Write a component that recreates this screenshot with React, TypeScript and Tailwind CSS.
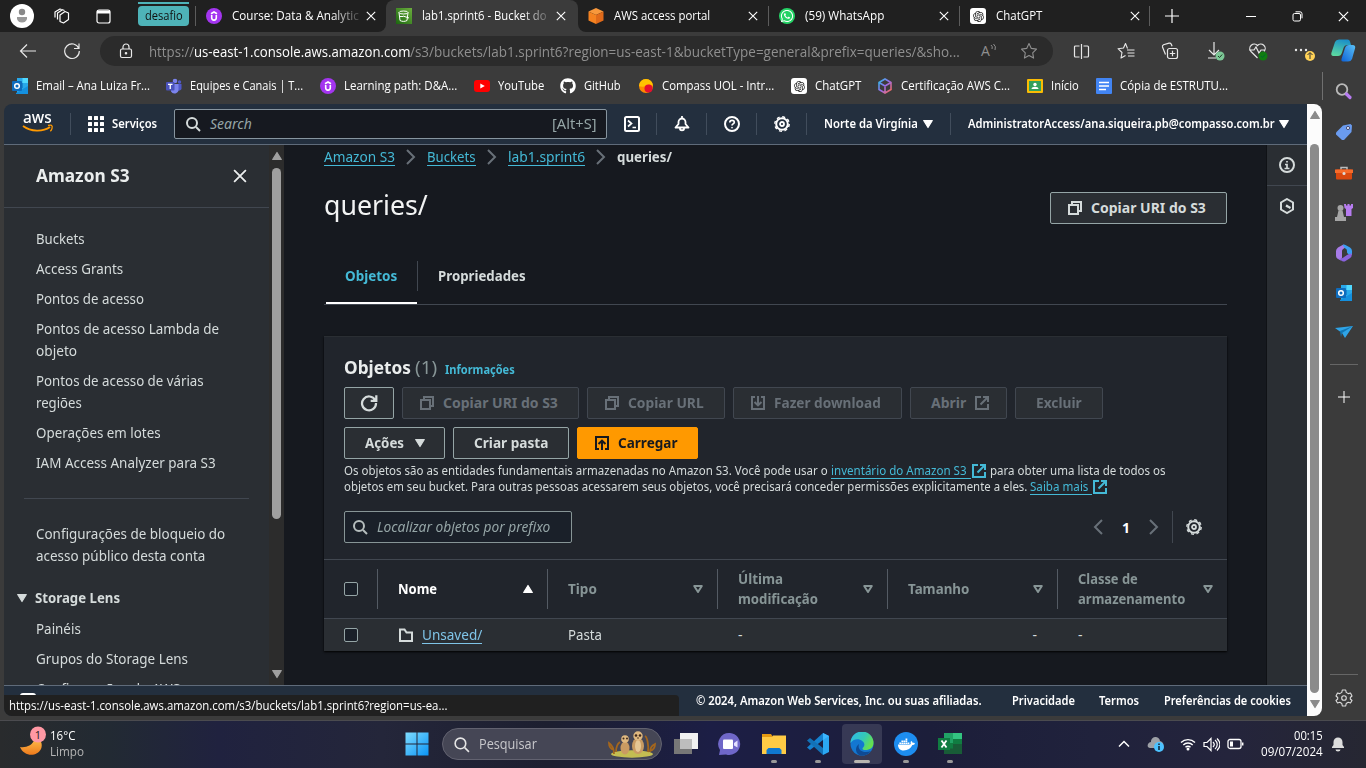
import React, { useLayoutEffect, useRef, useState } from 'react';
import { FaGithub, FaWhatsapp, FaDocker } from 'react-icons/fa';
import { RiOpenaiFill } from 'react-icons/ri';

type Kids = { children?: React.ReactNode };

/** Single line of text condensed or widened to a given width. */
function Fit({ w, className = '', children }: Kids & { w: number; className?: string }) {
  const ref = useRef<HTMLSpanElement>(null);
  const [k, setK] = useState(1);
  useLayoutEffect(() => {
    if (ref.current) setK(w / ref.current.offsetWidth);
  }, [w]);
  return (
    <span className={`block shrink-0 whitespace-nowrap ${className}`} style={{ width: w }}>
      <span ref={ref} className="inline-block origin-left" style={{ transform: `scaleX(${k})` }}>
        {children}
      </span>
    </span>
  );
}

function Svg({ s = 16, vb = 16, sw = 2, className = '', children }: Kids & { s?: number; vb?: number; sw?: number; className?: string }) {
  return (
    <svg width={s} height={s} viewBox={`0 0 ${vb} ${vb}`} fill="none" stroke="currentColor" strokeWidth={sw} className={`block shrink-0 ${className}`}>
      {children}
    </svg>
  );
}

/* ---------- console icons ---------- */
const Copy = () => (
  <Svg><path d="M2 5h9v9H2z" /><path d="M5 5V2h9v9h-3" /></Svg>
);
const External = ({ className = '' }: { className?: string }) => (
  <Svg className={className}><path d="M7 2H2v12h12V9" /><path d="M9 2h5v5M14 2 6.5 9.5" /></Svg>
);
const Download = () => (
  <Svg><path d="M5 2H2v12h12V2h-3" /><path d="M8 1v9M4.5 7 8 10.3 11.500 7" /></Svg>
);
const Upload = () => (
  <Svg><path d="M5 14H2V2h12v12h-3" /><path d="M8 15V6M4.500 9 8 5.700 11.500 9" /></Svg>
);
const Search = ({ sw = 2, s = 16 }: { sw?: number; s?: number }) => (
  <Svg sw={sw} s={s}><circle cx="7" cy="7" r="5" /><path d="m11 11 4 4" /></Svg>
);
const Gear = () => (
  <Svg><circle cx="8" cy="8" r="5.800" /><circle cx="8" cy="8" r="7.200" strokeWidth="1.400" strokeDasharray="3 2.655" /><circle cx="8" cy="8" r="2" strokeWidth="1.800" /></Svg>
);
const Caret = ({ up = false, hollow = false }) => (
  <svg width="12" height="10" viewBox="0 0 12 10" className="block shrink-0">
    <path d={up ? 'M6 1.500 10.300 8.500H1.700z' : hollow ? 'M2.200 2h7.600L6 8z' : 'M1.700 1.500h8.600L6 8.500z'} fill={hollow ? 'none' : 'currentColor'} stroke="currentColor" strokeWidth={hollow ? 2 : 1.200} strokeLinejoin="round" />
  </svg>
);
const ChevR = ({ flip = false }) => (
  <Svg className="text-[#687078]"><path d={flip ? 'm12 1-7 7 7 7' : 'm4 1 7 7-7 7'} /></Svg>
);

/* ---------- brand marks ---------- */
const Udemy = () => (
  <svg width="16" height="16" viewBox="0 0 16 16" className="block shrink-0"><circle cx="8" cy="8" r="8" fill="#a435f0" /><path d="M5.700 7v2.800a2.300 2.300 0 0 0 4.600 0V7M5 5.700 8 4l3 1.700" fill="none" stroke="#fff" strokeWidth="1.600" /></svg>
);
const OpenAI = () => (
  <span className="flex size-4 shrink-0 items-center justify-center rounded-[3px] bg-white text-[#222]"><RiOpenaiFill size={13} /></span>
);
const Outlook = () => (
  <svg width="17" height="16" viewBox="0 0 17 16" className="block shrink-0"><path d="M5 0h11v15H5z" fill="#28a8ea" /><path d="M10.500 0H16v5h-5.500z" fill="#50d9ff" /><path d="M5 5h5.500v5H5z" fill="#0364b8" /><path d="M4 15 16 8v8H4z" fill="#1490df" /><rect y="3" width="10" height="10" rx="1" fill="#0f6cbd" /><circle cx="5" cy="8" r="2.300" fill="none" stroke="#fff" strokeWidth="1.500" /></svg>
);
const Teams = () => (
  <svg width="16" height="16" viewBox="0 0 16 16" className="block shrink-0"><circle cx="9" cy="3" r="2.300" fill="#7b83eb" /><circle cx="13.500" cy="4" r="1.700" fill="#5059c9" /><path d="M11 6h4.500v5a3 3 0 0 1-4.500 1z" fill="#5059c9" /><path d="M5 6h7.500v5.500a4 4 0 0 1-7.500 2z" fill="#7b83eb" /><rect y="4" width="8.500" height="8.500" rx="1" fill="#4b53bc" /><path d="M2 6.300h4.500M4.250 6.500V11" stroke="#fff" strokeWidth="1.300" /></svg>
);
const Youtube = () => (
  <svg width="16" height="16" viewBox="0 0 16 16" className="block shrink-0"><rect y="2" width="16" height="12" rx="3" fill="#f00" /><path d="m6.300 5.500 4.500 2.500-4.500 2.500z" fill="#fff" /></svg>
);
const Compass = () => (
  <svg width="16" height="16" viewBox="0 0 16 16" className="block shrink-0"><circle cx="8" cy="8" r="7" fill="#ff8a00" /><path d="M1 8a7 7 0 0 1 14 0c-3-2-5-2-7 0-2 1-5 1-7 0" fill="#ffc400" /><circle cx="10.500" cy="10.500" r="4" fill="#e6102e" /></svg>
);
const Cube = () => (
  <svg width="16" height="16" viewBox="0 0 16 16" fill="none" strokeWidth="1.600" className="block shrink-0"><defs><linearGradient id="cube" x1="0" y1="0" x2="1" y2="1"><stop stopColor="#25c0e8" /><stop offset=".5" stopColor="#9a6bea" /><stop offset="1" stopColor="#ff6b4a" /></linearGradient></defs><path d="m8 1 6 3.500v7L8 15l-6-3.500v-7zM2 4.500 8 8l6-3.500M8 8v7" stroke="url(#cube)" /></svg>
);
const Classroom = () => (
  <svg width="16" height="16" viewBox="0 0 16 16" className="block shrink-0"><rect y="1" width="16" height="14" rx="1" fill="#fbbc04" /><rect x="2" y="3" width="12" height="10" fill="#34a05a" /><circle cx="8" cy="6.500" r="1.700" fill="#fff" /><path d="M4.500 11c0-3 7-3 7 0z" fill="#fff" /></svg>
);
const Docs = () => (
  <svg width="16" height="16" viewBox="0 0 16 16" className="block shrink-0"><rect width="16" height="16" rx="1" fill="#4285f4" /><path d="M3 4.500h10M3 8h10M3 11.500h7" stroke="#fff" strokeWidth="1.600" /></svg>
);
const Bucket = () => (
  <svg width="16" height="16" viewBox="0 0 16 16" className="block shrink-0"><defs><linearGradient id="bk" x1="0" y1="1" x2="1" y2="0"><stop stopColor="#1b660f" /><stop offset="1" stopColor="#6cae3e" /></linearGradient></defs><path d="M0 0h16v16H0z" fill="url(#bk)" /><g fill="none" stroke="#fff"><ellipse cx="7.500" cy="4.500" rx="4.500" ry="1.500" /><path d="m3 4.500 1 8c2 1.200 5 1.200 7 0l1-8M7 8l6 2M4 8.500h3" /></g></svg>
);
const AwsBox = () => (
  <svg width="16" height="16" viewBox="0 0 16 16" className="block shrink-0"><path d="m8 0 7.500 3.500L8 7 .500 3.500z" fill="#f8983c" /><path d="M.5 3.500 8 7v9L.5 12.500z" fill="#f58220" /><path d="M15.500 3.500 8 7v9l7.500-3.500z" fill="#e06a1a" /></svg>
);

/* ---------- browser chrome ---------- */
const X = ({ s = 10, sw = 1.1 }) => (
  <Svg s={s} vb={10} sw={sw}><path d="m.8.8 8.400 8.400M9.200.8.800 9.200" /></Svg>
);

function Tab({ icon, title, tw, w, active, fade, shape = '', sep }: { icon: React.ReactNode; title: string; tw: number; w: number; active?: boolean; fade?: boolean; shape?: string; sep?: boolean }) {
  return (
    <div className={`h-8 shrink-0 ${active ? 'bg-[#202020]' : 'bg-[#3b3b3b]'}`} style={{ width: w }}>
      <div className={`flex h-full items-center pl-[10px] ${active ? 'rounded-t-lg bg-[#3b3b3b]' : 'bg-[#202020]'} ${shape}`}>
        {icon}
        <div className={`ml-[10px] w-[128px] ${fade ? '[mask-image:linear-gradient(to_right,black_100px,transparent_132px)]' : ''}`}>
          <Fit w={tw}>{title}</Fit>
        </div>
        <span className="ml-[6px]"><X /></span>
        {sep && <span className="ml-auto h-5 w-px bg-[#5c5c5c]" />}
      </div>
    </div>
  );
}

function TabStrip() {
  return (
    <div className="flex h-8 items-center bg-[#202020] text-[12px] text-white">
      <div className="ml-[10px] flex size-6 items-center justify-center rounded-full bg-white">
        <svg width="14" height="16" viewBox="0 0 14 16"><circle cx="7" cy="4" r="3.200" fill="#888" /><path d="M2 9h10v1.500a5 4 0 0 1-10 0z" fill="#999" /></svg>
      </div>
      <Svg s={17} vb={17} sw={1.2} className="ml-[19px]"><path d="m7 7 5-3.500L15.500 5v6.500L10.500 15 7 13.500zM4.500 11.500V5l5-3.300 2 .8M2 9.500V4l5-3 1.500.5" strokeLinejoin="round" /></Svg>
      <Svg s={15} vb={15} sw={1.2} className="ml-[26px]"><rect x="1" y="1" width="13" height="13" rx="2" /><path d="M1 3h13" strokeWidth="3" /></Svg>
      <div className="ml-[27px] flex h-8 w-[51px] flex-col pt-[2px]">
        <span className="h-[2px] bg-[#4eb3b8]" />
        <span className="mt-[2px] flex h-5 items-center justify-center rounded bg-[#4eb3b8] text-[#111]"><Fit w={38}>desafio</Fit></span>
      </div>
      <span className="ml-[6px] h-5 w-px bg-[#5c5c5c]" />
      <Tab w={190} tw={127} icon={<Udemy />} title="Course: Data & Analytic" fade shape="rounded-br-lg" />
      <Tab w={192} tw={125} icon={<Bucket />} title="lab1.sprint6 - Bucket do" fade active />
      <Tab w={191} tw={96} icon={<AwsBox />} title="AWS access portal" shape="rounded-bl-lg" sep />
      <Tab w={191} tw={79} icon={<span className="flex size-4 items-center justify-center rounded-full bg-[#25d366]"><FaWhatsapp size={14} /></span>} title="(59) WhatsApp" sep />
      <Tab w={190} tw={46} icon={<OpenAI />} title="ChatGPT" sep />
      <Svg s={14} vb={14} sw={1.2} className="ml-[15px]"><path d="M7 0v14M0 7h14" /></Svg>
      <span className="ml-[67px] h-px w-[10px] bg-white" />
      <Svg s={11} vb={11} sw={1} className="ml-9"><rect x="1" y="2.500" width="7.500" height="7.500" rx="1.500" /><path d="M3.500.8h4.500a2 2 0 0 1 2 2v4.500" /></Svg>
      <span className="ml-[35px]"><X s={11} /></span>
    </div>
  );
}

const Star = ({ lines = false }) => (
  <Svg s={18} vb={18} sw={1.1}>
    {lines ? (
      <path d="M10.500 6.500 8.500 1.500 6.500 6 1 6.700l4 3.800L4 16l4.500-2.500M10 8h7.500M10.500 11h7M11 14h6.500" strokeLinejoin="round" />
    ) : (
      <path d="m9 1.500 2.300 4.900 5.200.7-3.800 3.700.9 5.300L9 13.500l-4.600 2.600.9-5.300L1.500 7.100l5.200-.7z" strokeLinejoin="round" />
    )}
  </Svg>
);

function AddressBar() {
  return (
    <div className="flex h-[38px] items-center text-[#e8e8e8]">
      <Svg s={18} vb={18} sw={1.2} className="ml-[19px]"><path d="M17 9H1.500M8 2.500 1.500 9 8 15.500" /></Svg>
      <Svg s={18} vb={18} sw={1.2} className="ml-[26px]"><path d="M15.800 6.500A7.300 7.300 0 1 0 16.300 9M16 1.500v5h-5" /></Svg>
      <div className="ml-[19px] flex h-[30px] w-[953px] items-center rounded-full bg-[#2b2b2b] text-[15px] text-[#8f8f8f]">
        <Svg s={16} sw={1.2} className="ml-[18px] text-[#e8e8e8]"><rect x="2.500" y="6" width="11" height="8.500" rx="1.500" /><path d="M5 6V4a3 3 0 0 1 6 0v2" /><circle cx="8" cy="10.300" r=".7" fill="currentColor" /></Svg>
        <Fit w={45} className="ml-[15px]">https://</Fit>
        <Fit w={216} className="text-white">us-east-1.console.aws.amazon.com</Fit>
        <Fit w={550}>/s3/buckets/lab1.sprint6?region=us-east-1&amp;bucketType=general&amp;prefix=queries/&amp;sho...</Fit>
        <span className="ml-[21px] flex items-start"><span className="text-[14px] leading-none">A</span><Svg s={7} vb={7} sw={1}><path d="M1 1q2 1.500 1 4M3.500 0q3 2.500 1.500 6" /></Svg></span>
        <span className="ml-[23px]"><Star /></span>
      </div>
      <Svg s={17} vb={17} sw={1.2} className="ml-5"><path d="M6.500 3H2.500a1 1 0 0 0-1 1v9a1 1 0 0 0 1 1h4M10.500 3h4a1 1 0 0 1 1 1v9a1 1 0 0 1-1 1h-4M8.500 1v15" /></Svg>
      <span className="ml-[27px]"><Star lines /></span>
      <Svg s={18} vb={18} sw={1.2} className="ml-[26px]"><rect x="6.500" y="6.500" width="10" height="10" rx="2" /><path d="M11.500 8.800v5.400M8.800 11.500h5.400M4.500 12.500 1.500 5a2 2 0 0 1 1-2.300L8 1.200a2 2 0 0 1 2.300 1l.8 2" /></Svg>
      <svg width="18" height="20" viewBox="0 0 18 20" fill="none" className="ml-7"><path d="M7 1v13M2 9l5 5 5-5M1 17h8" stroke="#e8e8e8" strokeWidth="1.200" /><circle cx="13" cy="15" r="4.500" fill="#7cc796" /><path d="m11 15 1.500 1.500 2.700-3" stroke="#1d3a26" /></svg>
      <svg width="19" height="19" viewBox="0 0 19 19" fill="none" className="ml-[24px]"><path d="M8.500 16 2 9.500a4 4 0 0 1 6.500-6 4 4 0 0 1 6.500 6M0 8h5l2-3 3 6 2-3h4" stroke="#e8e8e8" strokeWidth="1.200" /><circle cx="14" cy="14" r="4.500" fill="#107c10" /><path d="m12 14 1.500 1.500 2.700-3" stroke="#063" /></svg>
      <svg width="22" height="20" viewBox="0 0 22 20" fill="none" className="ml-[26px]"><g fill="#e8e8e8"><circle cx="2" cy="9" r="1.200" /><circle cx="7" cy="9" r="1.200" /><circle cx="12" cy="9" r="1.200" /></g><circle cx="16" cy="15" r="5" fill="#ffd257" /><path d="M16 18v-6M13.500 14l2.500-2.500 2.500 2.500" stroke="#333" /></svg>
      <svg width="25" height="24" viewBox="0 0 25 24" className="ml-[15px]"><defs><linearGradient id="cpA" x1=".6" y1="0" x2=".3" y2="1"><stop stopColor="#1b8fc8" /><stop offset="1" stopColor="#5cd9a0" /></linearGradient><linearGradient id="cpB" x1="0" y1="1" x2="1" y2="0"><stop stopColor="#0d62d8" /><stop offset="1" stopColor="#5ac0f5" /></linearGradient></defs><path d="M8 .5h8.500q2 0 2.500 2L20 6h-3.500q-3 0-4 3l-1.500 4.500q-1 3.500-4 3.500H3q-3.500 0-2.500-3.500L4 3Q5 .5 8 .5" fill="url(#cpA)" /><path d="M17 22.500h-5q-2 0-1.500-2.500l3.500-11q1-3 4-3h3.500q3.500 0 2.500 3.500L21 20q-1 2.500-4 2.500" fill="url(#cpB)" /></svg>
    </div>
  );
}

const bookmarks: [React.ReactNode, string, number, number][] = [
  [<Outlook />, 'Email – Ana Luiza Fr...', 114, 154],
  [<Teams />, 'Equipes e Canais | T...', 113, 154],
  [<Udemy />, 'Learning path: D&A...', 113, 154],
  [<Youtube />, 'YouTube', 46, 86],
  [<FaGithub size={16} className="shrink-0" />, 'GitHub', 37, 78],
  [<Compass />, 'Compass UOL - Intr...', 112, 153],
  [<OpenAI />, 'ChatGPT', 46, 86],
  [<Cube />, 'Certificação AWS C...', 109, 150],
  [<Classroom />, 'Início', 28, 69],
  [<Docs />, 'Cópia de ESTRUTU...', 108, 140],
];

function Bookmarks() {
  return (
    <div className="flex h-[34px] items-center pb-[2px] pl-3 text-[12px] text-white">
      {bookmarks.map(([icon, label, tw, w]) => (
        <div key={label} className="flex shrink-0 items-center" style={{ width: w }}>
          <span className="w-6 shrink-0">{icon}</span>
          <Fit w={tw}>{label}</Fit>
        </div>
      ))}
      <span className="ml-[86px] h-7 w-px bg-[#707070]" />
    </div>
  );
}

/* ---------- AWS console ---------- */
const Sep = ({ className = '' }) => <span className={`h-[22px] w-px shrink-0 bg-[#414d5c] ${className}`} />;
const NavIcon = ({ children }: Kids) => <span className="flex w-[49px] shrink-0 justify-center">{children}</span>;

function ConsoleNav() {
  return (
    <div className="flex h-[41px] shrink-0 items-center border-b border-[#5f6b7a] bg-[#232f3e] text-[12px] font-semibold text-white">
      <div className="-mt-[2px] ml-[18px] flex w-[31px] flex-col items-center">
        <span className="-mt-1 h-[15px] text-[17px] leading-[15px] font-medium"><Fit w={29}>aws</Fit></span>
        <svg width="32" height="9" viewBox="0 0 32 9" fill="none"><path d="M1 2c8 6 20 6 27 1" stroke="#f90" strokeWidth="1.800" /><path d="M26 1.500c3-.8 5-.5 4 3-.3 1-1 2.200-1.700 2.800" stroke="#f90" strokeWidth="1.300" /></svg>
      </div>
      <Sep className="ml-[17px]" />
      <svg width="16" height="16" viewBox="0 0 16 16" fill="#fff" className="ml-[17px]">
        {[0, 6, 12].map((y) => [0, 6, 12].map((x) => <rect key={`${x}${y}`} x={x} y={y} width="4" height="4" rx=".5" />))}
      </svg>
      <Fit w={45} className="ml-2">Serviços</Fit>
      <div className="ml-[17px] flex h-[30px] w-[433px] items-center rounded-[2px] border border-[#87959f] bg-[#161920] pr-[9px] pl-[10px] text-[14px] font-normal text-[#95a5a6]">
        <span className="text-[#d5dbdb]"><Search /></span>
        <Fit w={42} className="-mt-[2px] ml-[9px] italic">Search</Fit>
        <Fit w={45} className="-mt-[2px] ml-auto">[Alt+S]</Fit>
      </div>
      <NavIcon><Svg><rect x="1" y="1" width="14" height="14" rx="1.500" /><path d="m4 4.500 3.500 3L4 10.500M8.500 11.500H12" strokeWidth="1.700" /></Svg></NavIcon>
      <Sep />
      <NavIcon><Svg sw={1.8}><path d="M1.500 11.500h13L11.500 8V6a3.500 3.500 0 0 0-7 0v2zM8 0v2.500M5.700 12.500c.5 2.500 4.100 2.500 4.600 0" strokeLinejoin="round" /></Svg></NavIcon>
      <Sep />
      <NavIcon><Svg><circle cx="8" cy="8" r="7" /><path d="M5.800 6.500c0-3 4.500-2.800 4.500-.3C10.300 8 8 7.800 8 9.500" strokeWidth="1.700" /><circle cx="8" cy="11.700" r=".5" strokeWidth="1" /></Svg></NavIcon>
      <Sep />
      <NavIcon><Gear /></NavIcon>
      <Sep />
      <Fit w={94} className="ml-[17px]">Norte da Virgínia</Fit>
      <span className="ml-[4px]"><Caret /></span>
      <Sep className="ml-4" />
      <Fit w={307} className="ml-[17px]">AdministratorAccess/ana.siqueira.pb@compasso.com.br</Fit>
      <span className="ml-[3px]"><Caret /></span>
    </div>
  );
}

const NavLine = ({ w, children }: Kids & { w: number }) => <Fit w={w} className="h-[22px] leading-[22px]">{children}</Fit>;

function SideNav() {
  return (
    <div className="flex w-[280px] shrink-0 bg-[#2a2e33] text-[14px] text-[#d5dbdb]">
      <div className="w-[265px] overflow-hidden">
        <div className="flex h-[63px] items-center border-b border-[#414750] pl-8 text-[18px] font-bold text-[#eaeded]">
          <Fit w={94} className="-mt-[2px]">Amazon S3</Fit>
          <span className="ml-[103px]"><X s={14} sw={1.3} /></span>
        </div>
        <div className="flex flex-col gap-2 pt-5 pl-8">
          <NavLine w={49}>Buckets</NavLine>
          <NavLine w={87}>Access Grants</NavLine>
          <NavLine w={108}>Pontos de acesso</NavLine>
          <div><NavLine w={183}>Pontos de acesso Lambda de</NavLine><NavLine w={41}>objeto</NavLine></div>
          <div><NavLine w={168}>Pontos de acesso de várias</NavLine><NavLine w={46}>regiões</NavLine></div>
          <NavLine w={125}>Operações em lotes</NavLine>
          <NavLine w={180}>IAM Access Analyzer para S3</NavLine>
        </div>
        <div className="mx-5 mt-6 h-px bg-[#414750]" />
        <div className="mt-[24px] pl-8"><NavLine w={189}>Configurações de bloqueio do</NavLine><NavLine w={169}>acesso público desta conta</NavLine></div>
        <div className="mt-5 flex h-[22px] items-center pl-3 font-bold">
          <Caret /><Fit w={85} className="-mt-[2px] ml-[7px]">Storage Lens</Fit>
        </div>
        <div className="mt-[9px] flex flex-col gap-2 pl-8">
          <NavLine w={45}>Painéis</NavLine>
          <NavLine w={152}>Grupos do Storage Lens</NavLine>
          <NavLine w={144}>Configurações do AWS</NavLine>
        </div>
      </div>
      <div className="flex w-[15px] flex-col items-center bg-[#2c2c2c] pt-[6px] pb-[6px] text-[#9f9f9f]">
        <Caret up />
        <span className="mt-[7px] h-[351px] w-[9px] rounded-full bg-[#9f9f9f]" />
        <span className="mt-auto"><Caret /></span>
      </div>
    </div>
  );
}

function Btn({ w, label, lw, icon, trail, kind = 'normal', pad = 'pl-4' }: { w: number; label?: string; lw?: number; icon?: React.ReactNode; trail?: React.ReactNode; kind?: 'normal' | 'off' | 'primary'; pad?: string }) {
  const look = {
    normal: 'border-[#95a5a6] bg-[#2a2e33] text-[#d5dbdb]',
    off: 'border-[#414750] bg-[#2a2e33] text-[#687078]',
    primary: 'border-[#ff9900] bg-[#ff9900] text-[#16191f]',
  }[kind];
  return (
    <div className={`flex h-8 shrink-0 items-center gap-2 rounded-[2px] border text-[14px] font-bold ${look} ${pad}`} style={{ width: w }}>
      {icon}
      {label && <Fit w={lw || 50} className="-mt-[2px]">{label}</Fit>}
      {trail}
    </div>
  );
}

const Crumb = ({ w, children }: Kids & { w: number }) => (
  <span className="border-b border-[#44b9d6] text-[#44b9d6]"><Fit w={w} className="h-[17px] leading-[17px]">{children}</Fit></span>
);
const Box = () => <span className="block size-[14px] shrink-0 rounded-[2px] border border-[#95a5a6] bg-[#1a2029]" />;

function HeadCell({ lines, active }: { lines: [string, number][]; active?: boolean }) {
  return (
    <div className={`flex h-10 items-center justify-between border-l border-[#545b64] pr-[13px] pl-5 ${active ? 'text-white' : 'text-[#879596]'}`}>
      <div className="leading-5">{lines.map(([t, w]) => <Fit key={t} w={w}>{t}</Fit>)}</div>
      <Caret up={active} hollow={!active} />
    </div>
  );
}

function ObjectsPanel() {
  return (
    <div className="mt-[31px] h-[315px] w-[903px] border-t border-[#2a2e33] bg-[#21252c] shadow-[0_1px_2px_#000]">
      <div className="px-5 pt-[20px]">
        <div className="flex h-[22px] items-center text-[18px] text-[#eaeded]">
          <Fit w={67} className="-mt-[2px] font-bold">Objetos</Fit>
          <Fit w={22} className="-mt-[2px] ml-1 text-[#879596]">(1)</Fit>
          <Fit w={70} className="mt-[3px] ml-2 text-[12px] font-bold text-[#44b9d6]">Informações</Fit>
        </div>
        <div className="mt-2 flex gap-2">
          <Btn w={50} pad="pl-[15px]" icon={<Svg s={18}><path d="M13.500 5.500A6.200 6.200 0 1 0 14.200 8M14.500 1v5h-5" /></Svg>} />
          <Btn w={177} kind="off" icon={<Copy />} label="Copiar URI do S3" lw={115} />
          <Btn w={138} kind="off" icon={<Copy />} label="Copiar URL" lw={76} />
          <Btn w={169} kind="off" icon={<Download />} label="Fazer download" lw={107} />
          <Btn w={97} kind="off" pad="pl-5" trail={<External />} label="Abrir" lw={35} />
          <Btn w={88} kind="off" pad="pl-5" label="Excluir" lw={46} />
        </div>
        <div className="mt-2 flex gap-2">
          <Btn w={101} pad="pl-5" label="Ações" lw={39} trail={<span className="ml-[2px]"><Caret /></span>} />
          <Btn w={116} pad="pl-5" label="Criar pasta" lw={74} />
          <Btn w={121} kind="primary" icon={<Upload />} label="Carregar" lw={59} />
        </div>
        <div className="mt-1 text-[12px] leading-4 text-[#d5dbdb]">
          <div className="flex h-4">
            <Fit w={484}>Os objetos são as entidades fundamentais armazenadas no Amazon S3. Você pode usar o</Fit>
            <span className="ml-[3px] w-[140px] border-b border-[#44b9d6] text-[#44b9d6]"><Fit w={136}>inventário do Amazon S3</Fit></span>
            <External className="text-[#44b9d6]" />
            <Fit w={176} className="ml-[3px]">para obter uma lista de todos os</Fit>
          </div>
          <div className="flex h-4">
            <Fit w={683}>objetos em seu bucket. Para outras pessoas acessarem seus objetos, você precisará conceder permissões explicitamente a eles.</Fit>
            <span className="ml-[3px] w-[62px] border-b border-[#44b9d6] text-[#44b9d6]"><Fit w={58}>Saiba mais</Fit></span>
            <External className="text-[#44b9d6]" />
          </div>
        </div>
        <div className="mt-4 flex h-8 items-center">
          <div className="flex h-8 w-[228px] items-center rounded-[2px] border border-[#879596] bg-[#1a2029] pl-[7px] text-[14px] text-[#95a5a6] italic">
            <span className="text-[#b5bdbd]"><Search /></span>
            <Fit w={173} className="-mt-px ml-[9px]">Localizar objetos por prefixo</Fit>
          </div>
          <span className="ml-[518px]"><ChevR flip /></span>
          <Fit w={8} className="ml-4 text-[14px] font-bold text-white">1</Fit>
          <span className="ml-4"><ChevR /></span>
          <span className="ml-[10px] h-8 w-px bg-[#414750]" />
          <span className="ml-[13px] text-[#d5dbdb]"><Gear /></span>
        </div>
      </div>
      <div className="mt-4 grid h-[59px] grid-cols-[53px_repeat(5,170px)] items-center border-t border-[#414750] text-[14px] font-bold">
        <div className="pl-5"><Box /></div>
        <HeadCell active lines={[['Nome', 39]]} />
        <HeadCell lines={[['Tipo', 29]]} />
        <HeadCell lines={[['Última', 45], ['modificação', 80]]} />
        <HeadCell lines={[['Tamanho', 61]]} />
        <HeadCell lines={[['Classe de', 60], ['armazenamento', 107]]} />
      </div>
      <div className="grid h-[33px] grid-cols-[53px_repeat(5,170px)] items-center border-t border-[#414750] bg-[#2a2e33] text-[14px] leading-[18px] text-[#d5dbdb]">
        <div className="pl-5"><Box /></div>
        <div className="flex items-center pl-[21px]">
          <Svg><path d="M2 2.500h4.500l2 3H14V14H2z" /></Svg>
          <span className="ml-2 border-b border-[#7fc4e8] text-[#7fc4e8]"><Fit w={60} className="h-[17px] leading-[17px]">Unsaved/</Fit></span>
        </div>
        <div className="-mt-px pl-[21px]"><Fit w={34}>Pasta</Fit></div>
        <div className="-mt-px pl-[21px]">-</div>
        <div className="-mt-px pr-5 text-right">-</div>
        <div className="-mt-px pl-[21px]">-</div>
      </div>
    </div>
  );
}

function Main() {
  return (
    <div className="flex-1 overflow-hidden bg-[#16191f] pl-10 text-[14px] text-[#d5dbdb]">
      <div className="mt-[3px] flex h-[18px] items-center">
        <Crumb w={71}>Amazon S3</Crumb>
        <span className="mx-2"><ChevR /></span>
        <Crumb w={49}>Buckets</Crumb>
        <span className="mx-2"><ChevR /></span>
        <Crumb w={77}>lab1.sprint6</Crumb>
        <span className="mx-2"><ChevR /></span>
        <Fit w={55} className="-mt-px font-bold">queries/</Fit>
      </div>
      <div className="mt-[26px] flex h-8 w-[903px] items-center justify-between">
        <Fit w={104} className="-mt-[8px] text-[28px] leading-8 text-[#f2f3f3]">queries/</Fit>
        <Btn w={177} icon={<Copy />} label="Copiar URI do S3" lw={115} />
      </div>
      <div className="mt-[24px] flex h-[57px] w-[903px] border-b border-[#414750] pl-[2px] font-bold">
        <div className="flex h-full w-[91px] items-start border-b-2 border-white pt-[17px] pl-[19px] text-[#44b9d6]"><Fit w={52}>Objetos</Fit></div>
        <span className="mt-[13px] h-[30px] w-px bg-[#414750]" />
        <Fit w={88} className="mt-[17px] ml-5">Propriedades</Fit>
      </div>
      <ObjectsPanel />
    </div>
  );
}

function Footer() {
  return (
    <div className="relative flex h-[31px] shrink-0 items-center border-t border-[#5f6b7a] bg-[#232f3e] text-[12px] font-semibold text-white">
      <span className="absolute top-[7px] left-4 h-4 w-4 rounded-[3px] border-2 border-white" />
      <Fit w={286} className="ml-[692px]">© 2024, Amazon Web Services, Inc. ou suas afiliadas.</Fit>
      <Fit w={63} className="ml-[30px]">Privacidade</Fit>
      <Fit w={40} className="ml-[24px]">Termos</Fit>
      <Fit w={127} className="ml-[25px]">Preferências de cookies</Fit>
      <div className="absolute bottom-0 left-0 flex h-[21px] w-[675px] items-center rounded-tr bg-[#202020] pl-[5px] font-['Open_Sans','Noto_Sans',sans-serif] font-normal">
        <Fit w={438}>https://us-east-1.console.aws.amazon.com/s3/buckets/lab1.sprint6?region=us-ea...</Fit>
      </div>
    </div>
  );
}

function Page() {
  return (
    <div className="flex h-[612px] w-[1318px] overflow-hidden rounded-lg">
      <div className="flex w-[1303px] flex-col">
        <ConsoleNav />
        <div className="flex min-h-0 flex-1">
          <SideNav />
          <Main />
          <div className="flex w-[41px] shrink-0 flex-col items-center border-l border-[#101216] bg-[#2a2e33] text-[#d5dbdb]">
            <div className="flex h-[41px] w-full items-center justify-center border-b border-[#414750]">
              <Svg><circle cx="8" cy="8" r="7" /><path d="M6 7.500h2v4M5.500 11.500h5M8 4v1.600" strokeWidth="1.700" /></Svg>
            </div>
            <span className="mt-3"><Svg><path d="m8 1 6 3.500v7L8 15l-6-3.500v-7z" /><circle cx="8" cy="8" r="1.200" fill="currentColor" stroke="none" /><path d="M7 7.500 11.500 10" strokeWidth="2.200" /></Svg></span>
          </div>
        </div>
        <Footer />
      </div>
      <div className="flex w-[15px] flex-col items-center bg-[#fcfcfc] pt-[6px] pb-[7px] text-[#8b8b8b]">
        <Caret up />
        <span className="mt-[24px] h-[549px] w-[9px] rounded-full bg-[#8b8b8b]" />
        <span className="mt-auto"><Caret /></span>
      </div>
    </div>
  );
}

function EdgeSidebar() {
  return (
    <div className="flex w-11 flex-col items-center">
      <svg width="20" height="20" viewBox="0 0 20 20" fill="none" className="-mt-[23px]"><circle cx="8" cy="8.500" r="5.300" stroke="#b9b9b9" strokeWidth="1.800" /><path d="m12.500 13 3.500 3.500" stroke="#b77cf0" strokeWidth="3.200" strokeLinecap="round" /></svg>
      <svg width="18" height="18" viewBox="0 0 18 18" className="mt-[22px]"><path d="m1 9.500 7-7L15.500 1 17 2.500 16.500 9 9 17H7L1 11.500z" fill="#6a9bef" /><circle cx="13" cy="5" r="1.600" fill="#dfe9ff" stroke="#335" strokeWidth=".8" /></svg>
      <svg width="18" height="16" viewBox="0 0 18 16" className="mt-[24px]"><path d="M6 5V2.500h6V5" fill="none" stroke="#bbb" strokeWidth="1.500" /><rect x="1" y="4.500" width="16" height="10" rx="1" fill="#d9480f" /><path d="M0 4.500h18v3.500H0z" fill="#f76b2a" /><circle cx="9" cy="8.500" r="1.500" fill="#ddd" /></svg>
      <svg width="18" height="19" viewBox="0 0 18 19" className="mt-[22px]"><path d="M9 1h2v1.500h1.500V1h2v1.500H16V1h2v4l-1.500 1v7H11V6L9.500 5z" fill="#b77cf0" /><g fill="#a5a5a5"><circle cx="5.500" cy="5" r="3" /><path d="M3.500 7.500h4L9 14h2v4H0v-4h2z" /></g></svg>
      <svg width="18" height="18" viewBox="0 0 18 18" className="mt-[22px]"><path d="M8.500.5 3 3.500Q1 5 1 7v5q0 2 2 3l3 1.500 1-3V7q0-1.500 1.500-2.300L11 3z" fill="#a77be8" /><path d="M7.500 1Q9 0 10.500 1L15 3.500q2 1.200 2 3.500v4q-4 0-5-2.500V7q0-2-2-2.800z" fill="#3aa0f3" /><path d="M17 9.500q0 4-2.500 5L10.500 17q-1.500 1-3.500 0l-4-2.500q3 .5 5-.8l4-2.700q2-1.500 5-1.500" fill="#8a63dd" /><path d="M7.500 7 9.500 6 12 7.500v3L9.500 12l-2-1z" fill="#3b3b3b" /></svg>
      <span className="mt-[23px]"><Outlook /></span>
      <svg width="18" height="14" viewBox="0 0 18 14" className="mt-[24px]"><path d="m0 3 18-2-8 12-3-5z" fill="#2fa4e7" /><path d="M18 1 7 8l-1 4-1-6z" fill="#1277b5" /></svg>
      <span className="mt-[25px] h-px w-7 bg-[#666]" />
      <Svg s={12} vb={12} sw={1} className="mt-[26px] text-white"><path d="M6 0v12M0 6h12" /></Svg>
      <span className="mt-[271px] h-px w-7 bg-[#666]" />
      <Svg s={18} vb={18} sw={1.1} className="mt-[14px] text-[#ddd]"><circle cx="9" cy="9" r="2.300" /><path d="m7.300 1-.5 2.400-2 1.200L2.500 4 1 7l1.700 1.500v1.500L1 11.500 2.500 14l2.300-.7 2 1.200.5 2.500h3.400l.5-2.500 2-1.200 2.300.7 1.500-2.500-1.700-1.500V8.500L17 7l-1.500-3-2.300.6-2-1.200L10.700 1z" strokeLinejoin="round" /></Svg>
    </div>
  );
}

/* ---------- taskbar ---------- */
const Slot = ({ active, mark, children }: Kids & { active?: boolean; mark?: boolean }) => (
  <div className={`flex h-10 w-10 shrink-0 flex-col items-center rounded pt-2 ${active ? 'bg-white/12' : ''}`}>
    {children}
    <span className={`mt-auto mb-px h-[3px] rounded-full ${active ? 'w-4 bg-[#b9b5b0]' : mark ? 'w-[6px] bg-[#999]' : 'w-0'}`} />
  </div>
);

function Meerkats() {
  return (
    <svg width="48" height="27" viewBox="0 0 48 27">
      <ellipse cx="24" cy="23" rx="21" ry="3.700" fill="#c3bd52" />
      <path d="M6 23C6 17 4 14 1 12c0 4 2 6 5 7M8 21c0-5 1-8 4-10M42 21c0-5 3-7 5-8 0 4-2 6-5 7M40 21c1-7-1-15-3-16" stroke="#a4661c" strokeWidth="1.800" fill="none" />
      <ellipse cx="17" cy="17" rx="4.500" ry="6.500" fill="#c99b62" /><circle cx="17" cy="8" r="3.800" fill="#dfb980" /><ellipse cx="30" cy="15" rx="6" ry="8" fill="#c99b62" /><ellipse cx="30" cy="15" rx="3" ry="6" fill="#e6c794" /><circle cx="30" cy="5" r="4.700" fill="#dfb980" />
      <g fill="#40291a"><circle cx="15.500" cy="7.500" r="1" /><circle cx="19" cy="7.500" r="1" /><circle cx="28" cy="4.500" r="1.300" /><circle cx="32" cy="4.500" r="1.300" /><circle cx="30" cy="7" r=".8" /></g>
    </svg>
  );
}

function Taskbar() {
  return (
    <div className="flex h-12 items-center border-t border-[#4b4b4f] bg-[linear-gradient(90deg,#292b2d_0%,#222a33_8%,#20223f_16%,#24263a_28%,#1d1f30_40%,#1c1e45_52%,#1c1e3a_68%,#20223c_80%,#24243c_90%,#262732_100%)] pb-px text-[12px] text-white">
      <svg width="30" height="32" viewBox="0 0 30 32" className="-mt-[6px] ml-[18px] shrink-0"><defs><linearGradient id="moon" x1="0" y1="0" x2="0" y2="1"><stop stopColor="#ffc14d" /><stop offset="1" stopColor="#ee7a1c" /></linearGradient></defs><path d="M2 22c5 1 13-1 15-9 6 1 8 6 6 11-4 8-17 8-21-2" fill="url(#moon)" /><circle cx="20" cy="9.500" r="8" fill="#ff98a4" /><text x="20" y="13.500" textAnchor="middle" fontSize="11" fill="#222">1</text></svg>
      <div className="-mt-px ml-[2px] leading-4"><Fit w={25}>16°C</Fit><Fit w={34} className="text-[#b5b5b5]">Limpo</Fit></div>
      <svg width="24" height="24" viewBox="0 0 24 24" className="ml-[321px] shrink-0"><defs><linearGradient id="win" x1="0" y1="0" x2="1" y2="1"><stop stopColor="#7fdcff" /><stop offset="1" stopColor="#0a94f5" /></linearGradient></defs><path d="M.5.5h11v11H.5zm12 0h11v11h-11zm-12 12h11v11H.5zm12 0h11v11h-11z" fill="url(#win)" /></svg>
      <div className="ml-[13px] flex h-8 w-[220px] shrink-0 items-center rounded-full border border-[#626270] bg-[#454655] pl-[10px] text-[14px] text-[#c8c8cc]">
        <span className="text-[#e5e5e5]"><Search sw={1.5} s={17} /></span>
        <Fit w={58} className="-mt-px ml-[9px]">Pesquisar</Fit>
        <span className="ml-[71px]"><Meerkats /></span>
      </div>
      <div className="ml-1 flex gap-1">
        <Slot><svg width="24" height="24" viewBox="0 0 24 24"><path d="M6 1h18v16H6z" fill="#f1f1f1" /><path d="M0 7h18v15H0z" fill="#777" /><path d="M6 7h12v10H6z" fill="#bdbdbd" /></svg></Slot>
        <Slot><svg width="24" height="24" viewBox="0 0 24 24"><path d="M12 1a11 11 0 1 1-4 21.500L1 23l1-5A11 11 0 0 1 12 1" fill="#6f67c8" /><rect x="5" y="7.500" width="10" height="9.500" rx="1" fill="#fff" /><path d="m16 11 3.500-2.500v7L16 13.500z" fill="#e3e0ff" /></svg></Slot>
        <Slot mark><svg width="24" height="24" viewBox="0 0 24 24"><path d="M0 2h9l2 3H0z" fill="#e59a12" /><path d="M0 5h10l1-1.500h13V22H0z" fill="#ffcb45" /><path d="M4.500 22v-4l2-2h11l2 2v4z" fill="#0f78d0" /></svg></Slot>
        <Slot mark><svg width="24" height="24" viewBox="0 0 24 24"><path d="m17 1 6 3v16l-6 3z" fill="#2ba7f2" /><path d="M17 1 1 15.500 4 18 17 8z" fill="#1581cf" /><path d="M17 23 1 8.500 4 6l13 10z" fill="#1272b8" /><path d="m17 1 6 3-6 4z" fill="#3cb6ff" /></svg></Slot>
        <Slot active><svg width="24" height="24" viewBox="0 0 24 24"><defs><linearGradient id="eg" x1="0" y1="0" x2="1" y2=".5"><stop stopColor="#2db8ee" /><stop offset=".6" stopColor="#35c9b5" /><stop offset="1" stopColor="#66e04e" /></linearGradient></defs><circle cx="12" cy="12" r="11.500" fill="#1377d1" /><path d="M.5 11A11.500 11.500 0 0 1 23.500 11c0 5-4 7-8 7-3 0-4-1-2-3 4-5-7-12-13-4" fill="url(#eg)" /><path d="M9 12c-2 6 4 10 12 7-3 4-8 5.500-12 4-4-3-4-8 0-11" fill="#0e4a94" /></svg></Slot>
        <Slot mark><span className="flex size-6 shrink-0 items-center justify-center rounded-full bg-[#1d8df0]"><FaDocker size={17} /></span></Slot>
        <Slot mark><svg width="24" height="24" viewBox="0 0 24 24"><path d="M6 1h18v21H6z" fill="#185c37" /><path d="M6 1h9v10.500H6z" fill="#21a366" /><path d="M15 1h9v6h-9z" fill="#33c481" /><path d="M15 7h9v5h-9zM6 11h9v5.500H6z" fill="#107c41" /><rect y="6" width="12" height="12" fill="#107c41" /><path d="m3.500 8.500 5 7M8.500 8.500l-5 7" stroke="#fff" strokeWidth="1.800" /></svg></Slot>
      </div>
      <Svg s={12} vb={12} sw={1.5} className="ml-[148px]"><path d="m1 8.500 5-5 5 5" /></Svg>
      <svg width="18" height="18" viewBox="0 0 18 18" className="ml-[17px]"><path d="M1 12a3.500 3.500 0 0 1 3-5 4.500 4.500 0 0 1 9-1 4 4 0 0 1 2 7H4a3 3 0 0 1-3-1" fill="#9da0a6" /><circle cx="12" cy="12" r="5" fill="#4cc2ff" /><path d="M12 11v4M12 8.500V10" stroke="#123" strokeWidth="1.500" /></svg>
      <Svg s={16} sw={1.4} className="ml-[15px]"><path d="M1 6.500a10 10 0 0 1 14 0M3.300 9a6.700 6.700 0 0 1 9.400 0M5.500 11.300a3.500 3.500 0 0 1 5 0" /><circle cx="8" cy="13" r=".8" fill="currentColor" /></Svg>
      <Svg s={17} vb={17} sw={1.2} className="ml-[7px]"><path d="M1 6.500h3l4-4v12l-4-4H1zM10 6c1.500 1.500 1.500 3.500 0 5M12 4c3 2.500 3 6.500 0 9M14 2.500c4 4 4 8 0 12" /></Svg>
      <svg width="17" height="12" viewBox="0 0 17 12" fill="none" className="ml-[7px]"><rect x="1" y="1.500" width="13" height="9" rx="2" stroke="#fff" strokeWidth="1.300" /><path d="M3 3.500h3v5H3z" fill="#fff" /><path d="M15.700 4.500v3" stroke="#fff" strokeWidth="1.500" /></svg>
      <div className="-mt-px ml-4 flex w-[63px] flex-col items-end leading-4"><Fit w={29}>00:15</Fit><Fit w={62}>09/07/2024</Fit></div>
      <svg width="14" height="16" viewBox="0 0 14 16" className="ml-2" fill="#ddd"><path d="M1 12V11L2.500 9V6a4.500 4.500 0 0 1 9 0v3L13 11v1zM4.500 13.500h5a2.500 2 0 0 1-5 0" /></svg>
    </div>
  );
}

export default function App() {
  return (
    <div className="h-[768px] w-[1366px] overflow-hidden bg-[#3b3b3b] font-['Open_Sans','Noto_Sans',sans-serif]">
      <TabStrip />
      <AddressBar />
      <Bookmarks />
      <div className="flex h-[616px] pl-1 font-['Noto_Sans',sans-serif]">
        <Page />
        <EdgeSidebar />
      </div>
      <Taskbar />
    </div>
  );
}
